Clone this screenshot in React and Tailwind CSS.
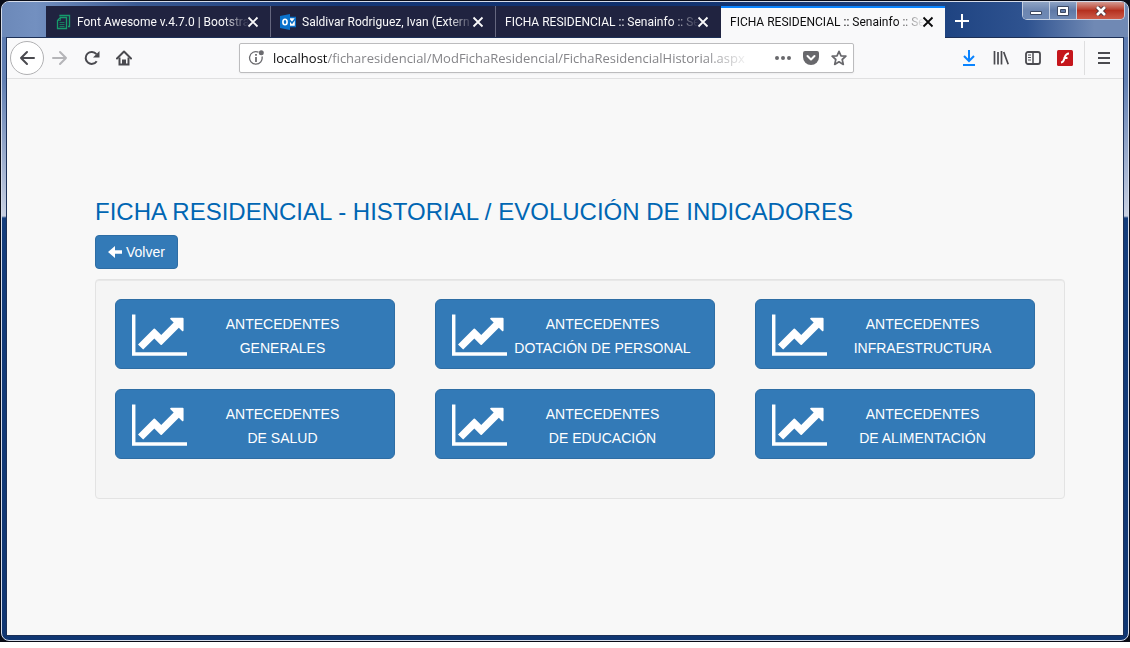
import React from "react";

const tabs = [
  { title: "Font Awesome v.4.7.0 | Bootstra", icon: "copy" },
  { title: "Saldivar Rodriguez, Ivan (Extern", icon: "outlook" },
  { title: "FICHA RESIDENCIAL :: Senainfo :: Se" },
  { title: "FICHA RESIDENCIAL :: Senainfo :: Se", active: true },
];

const sections = [
  ["ANTECEDENTES", "GENERALES"],
  ["ANTECEDENTES", "DOTACIÓN DE PERSONAL"],
  ["ANTECEDENTES", "INFRAESTRUCTURA"],
  ["ANTECEDENTES", "DE SALUD"],
  ["ANTECEDENTES", "DE EDUCACIÓN"],
  ["ANTECEDENTES", "DE ALIMENTACIÓN"],
];

function Icon({ children, className = "" }) {
  return (
    <svg
      viewBox="0 0 16 16"
      className={`size-4 shrink-0 ${className}`}
      fill="none"
      stroke="currentColor"
      strokeWidth="2"
      aria-hidden="true"
    >
      {children}
    </svg>
  );
}

function CopyIcon() {
  return (
    <Icon className="text-[#169b6b]">
      <path d="M5 2.5V1.5H14.5V12.5H13" strokeWidth="1.3" />
      <path d="M5.5 3.5H11.5V14.5H2.5V6.5Z" strokeWidth="1.3" />
      <path d="M5.5 3.5V6.5H2.5M4.5 8.5H9.5M4.5 10.5H9.5M4.5 12.5H9.5" strokeWidth="1" opacity=".7" />
    </Icon>
  );
}

function OutlookIcon() {
  return (
    <Icon>
      <path d="M9 3.5H15.5V12.5H9Z" fill="#fff" stroke="#0a6fc9" strokeWidth="1.4" />
      <path d="M9.5 6L12 9L15.5 4.5" stroke="#0a6fc9" strokeWidth="1.5" />
      <path d="M0 2L10 0V16L0 14Z" fill="#0a72cc" stroke="none" />
      <ellipse cx="5" cy="8" rx="2.1" ry="2.8" stroke="#fff" strokeWidth="1.6" />
    </Icon>
  );
}

function Tab({ title, icon, active }) {
  return (
    <div
      className={
        active
          ? "relative -mb-px flex h-8 w-[224px] min-w-0 items-center border-t-2 border-[#0a84ff] bg-[#f9f9fa] pr-[9px] pb-[3px] pl-[9px] text-[#0c0c0d]"
          : "flex h-[31px] w-[225px] min-w-0 items-center border-r border-[#65677f] bg-[#202340] pr-[9px] pl-[9px] text-[#f9f9fa] nth-3:border-[#202340]"
      }
    >
      {icon && (
        <span className="mr-[6px]">
          {icon === "copy" ? <CopyIcon /> : <OutlookIcon />}
        </span>
      )}
      <span className="min-w-0 flex-1 overflow-hidden mask-r-from-85% font-['Roboto',sans-serif] text-xs whitespace-nowrap">
        {title}
      </span>
      <button type="button" aria-label="Cerrar pestaña" className="-ml-1">
        <Icon>
          <path d="M3.5 3.5L12.5 12.5M12.5 3.5L3.5 12.5" strokeWidth="1.8" />
        </Icon>
      </button>
    </div>
  );
}

function WindowControls() {
  return (
    <div className="ml-auto flex h-[18px] self-start overflow-hidden rounded-b-[5px] border border-t-0 border-[#c3cee0] text-white">
      <button type="button" aria-label="Minimizar" className="flex w-[27px] items-center justify-center border-r border-[#c3cee0] bg-linear-to-b from-[#8ea3c4] via-[#6d86b0] via-50% to-[#6f8ab5]">
        <svg viewBox="0 0 12 10" className="h-[10px] w-3" aria-hidden="true">
          <path d="M.5 5.5H11.5V8.5H.5Z" fill="#fff" stroke="#3c4963" />
        </svg>
      </button>
      <button type="button" aria-label="Maximizar" className="flex w-[27px] items-center justify-center border-r border-[#c3cee0] bg-linear-to-b from-[#8ea3c4] via-[#5f79a6] via-50% to-[#6f8ab5]">
        <svg viewBox="0 0 12 10" className="h-[10px] w-3" aria-hidden="true">
          <path d="M.5 .5H11.5V9.5H.5ZM3.5 3.5V6.5H8.5V3.5Z" fill="#fff" fillRule="evenodd" stroke="#3c4963" />
        </svg>
      </button>
      <button type="button" aria-label="Cerrar" className="flex w-[47px] items-center justify-center bg-linear-to-b from-[#d39a92] via-[#b5301f] via-50% to-[#cc5a48]">
        <svg viewBox="0 0 12 10" className="h-[10px] w-3" aria-hidden="true">
          <path d="M2 1L10 9M10 1L2 9" stroke="#4a3038" strokeWidth="4.4" />
          <path d="M2 1L10 9M10 1L2 9" stroke="#fff" strokeWidth="2.6" />
        </svg>
      </button>
    </div>
  );
}

function Toolbar() {
  return (
    <div className="flex h-[41px] items-center border-b border-[#e0e0e1] bg-[#f9f9fa] pr-[11px] pl-[3px] text-[#4a4a4f]">
      <button type="button" aria-label="Atrás" className="flex size-[34px] shrink-0 items-center justify-center rounded-full border border-[#b1b1b3] bg-white">
        <Icon>
          <path d="M15 8H2M8 2L2 8L8 14" strokeLinecap="round" strokeLinejoin="round" />
        </Icon>
      </button>
      <div className="flex gap-4 pl-2">
        <button type="button" aria-label="Adelante" className="text-[#b5b5b8]">
          <Icon>
            <path d="M1 8H14M8 2L14 8L8 14" strokeLinecap="round" strokeLinejoin="round" />
          </Icon>
        </button>
        <button type="button" aria-label="Recargar">
          <Icon>
            <path d="M12.7 11.2A6 6 0 1 1 12.4 4.2" />
            <path d="M15.5 1V7.5H9Z" fill="currentColor" stroke="none" />
          </Icon>
        </button>
        <button type="button" aria-label="Inicio">
          <Icon>
            <path d="M1 8.5L8 1.5L15 8.5" strokeLinecap="round" strokeLinejoin="round" />
            <path d="M3.5 7.5V14.5H12.5V7.5" />
            <path d="M6 14V9.5H10V14Z" fill="currentColor" stroke="none" />
          </Icon>
        </button>
      </div>
      <div className="mr-[107px] ml-[107px] flex h-[30px] min-w-0 flex-1 items-center rounded-xs border border-[#bcbcbe] bg-white pr-[6px] pl-2 shadow-xs">
        <svg viewBox="0 0 18 16" className="h-4 w-[18px] shrink-0 text-[#6b6b6f]" fill="none" stroke="currentColor" aria-hidden="true">
          <path d="M10.5 2.2A6.3 6.3 0 1 0 14 6.5" strokeWidth="1.3" />
          <path d="M8 7V12M8 4V5.8" strokeWidth="1.8" />
          <circle cx="13.3" cy="2.7" r="2.5" fill="currentColor" stroke="none" />
        </svg>
        <a href="#direccion" className="ml-[7px] min-w-0 flex-1 overflow-hidden mask-r-from-90% pt-px text-[13px] whitespace-nowrap text-[#858589]">
          <span className="text-[#0c0c0d]">localhost</span>
          /ficharesidencial/ModFichaResidencial/FichaResidencialHistorial.aspx
        </a>
        <div className="ml-6 flex gap-3 text-[#68686c]">
          <button type="button" aria-label="Acciones de página">
            <Icon>
              <path d="M0 8a2 2 0 1 0 4 0a2 2 0 1 0-4 0M6 8a2 2 0 1 0 4 0a2 2 0 1 0-4 0M12 8a2 2 0 1 0 4 0a2 2 0 1 0-4 0" fill="currentColor" stroke="none" />
            </Icon>
          </button>
          <button type="button" aria-label="Guardar en Pocket">
            <Icon>
              <path d="M2 1H14Q16 1 16 3V7A8 8 0 0 1 0 7V3Q0 1 2 1Z" fill="currentColor" stroke="none" />
              <path d="M4.5 6L8 9.5L11.5 6" stroke="#fff" strokeLinecap="round" strokeLinejoin="round" />
            </Icon>
          </button>
          <button type="button" aria-label="Marcador">
            <Icon>
              <path d="M8 1.3L10 5.8L14.9 6.2L11.2 9.5L12.3 14.4L8 11.8L3.7 14.4L4.8 9.5L1.1 6.2L6 5.8Z" strokeWidth="1.7" strokeLinejoin="round" />
            </Icon>
          </button>
        </div>
      </div>
      <div className="flex items-center gap-4">
        <button type="button" aria-label="Descargas" className="text-[#0a84ff]">
          <Icon>
            <path d="M8 0V10.5M3 6L8 11L13 6M2 15H14" />
          </Icon>
        </button>
        <button type="button" aria-label="Biblioteca">
          <Icon>
            <path d="M1.5 1V14.5M5 2V14.5M8.5 1V14.5M10.7 2L15.2 14.3" strokeWidth="1.7" />
          </Icon>
        </button>
        <button type="button" aria-label="Barra lateral">
          <Icon>
            <rect x="1" y="2" width="14" height="12" rx="2" strokeWidth="1.8" />
            <path d="M8 2V14" strokeWidth="1.5" />
            <path d="M3 5H6M3 7.5H6M3 10H6" strokeWidth="1" />
          </Icon>
        </button>
        <button type="button" aria-label="Flash">
          <Icon>
            <rect x="0" y="0" width="16" height="16" rx="1.5" fill="#c5161c" stroke="none" />
            <path d="M12 3.5C8.5 3.5 8.3 6 7.4 8.5C6.7 11 6 12.3 4 12.5M6.5 8H10.5" stroke="#fff" />
          </Icon>
        </button>
      </div>
      <div className="ml-[11px] h-[34px] w-px bg-[#dededf]" />
      <button type="button" aria-label="Menú" className="ml-[11px]">
        <Icon>
          <path d="M2 3H14M2 8H14M2 13H14" />
        </Icon>
      </button>
    </div>
  );
}

function SectionButton({ lines }) {
  return (
    <button type="button" className="flex h-[70px] items-center rounded-md border border-[#2e6da4] bg-[#337ab7] px-4 pt-1 text-sm leading-6 text-white">
      <svg viewBox="0 128 2048 1536" className="mb-[2px] h-[42px] w-[55px] shrink-0" fill="currentColor" aria-hidden="true">
        <path d="M2048 1536v128h-2048v-1536h128v1408h1920zM1920 288v435q0 21-19.5 29.5t-35.5-7.5l-121-121-633 633q-10 10-23 10t-23-10l-233-233-416 416-192-192 585-585q10-10 23-10t23 10l233 233 464-464-121-121q-16-16-7.5-35.5t29.5-19.5h435q14 0 23 9t9 23z" />
      </svg>
      <span className="flex flex-1 flex-col whitespace-nowrap">
        <span>{lines[0]}</span>
        <span>{lines[1]}</span>
      </span>
    </button>
  );
}

export default function App() {
  return (
    <div className="flex min-h-screen flex-col bg-white pb-[6px] font-['Open_Sans',sans-serif]">
      <div className="flex flex-1 bg-[#0a0d18] p-px">
        <div className="flex min-w-0 flex-1 flex-col overflow-hidden rounded-lg border border-[#d5dcea] bg-[linear-gradient(to_bottom,#5877ae_0,#6280b3_80px,#c8d0e2_214px,#143d7c_216px,#103672_100%)]">
          <header className="flex h-[35px] items-end bg-[linear-gradient(to_right,#6c89b9_0,#7390c0_3%,#3a5a93_12%,#143777_30%,#0f2f6b_55%,#1d4280_83%,#2f5390_91%,#7089b4_97%)] pr-[3px] pl-11">
            {tabs.map((tab, i) => (
              <Tab key={i} {...tab} />
            ))}
            <button type="button" aria-label="Nueva pestaña" className="mb-2 ml-[9px] text-white">
              <Icon>
                <path d="M8 1V15M1 8H15" />
              </Icon>
            </button>
            <WindowControls />
          </header>
          <div className="mx-1 mb-1 flex flex-1 flex-col border border-[#1c3057] bg-[#f8f8f8]">
            <Toolbar />
            <main className="pt-[116px] pr-[58px] pl-[88px] font-['Liberation_Sans',Arial,sans-serif]">
              <h1 className="text-2xl leading-[34px] text-[#0066b3]">
                FICHA RESIDENCIAL - HISTORIAL / EVOLUCIÓN DE INDICADORES
              </h1>
              <button type="button" className="mt-[6px] flex h-[34px] items-center gap-1 rounded-sm border border-[#2e6da4] bg-[#337ab7] px-3 text-sm text-white">
                <svg viewBox="0 0 14 14" className="size-[14px]" fill="currentColor" aria-hidden="true">
                  <path d="M0 7L7 1V5.2H14V8.8H7V13Z" />
                </svg>
                Volver
              </button>
              <section className="mt-[10px] grid grid-cols-3 gap-x-10 gap-y-5 rounded-sm border border-[#e3e3e3] bg-[#f5f5f5] pt-[19px] pr-[29px] pb-[39px] pl-[19px] inset-shadow-2xs">
                {sections.map((lines) => (
                  <SectionButton key={lines[1]} lines={lines} />
                ))}
              </section>
            </main>
          </div>
        </div>
      </div>
    </div>
  );
}
